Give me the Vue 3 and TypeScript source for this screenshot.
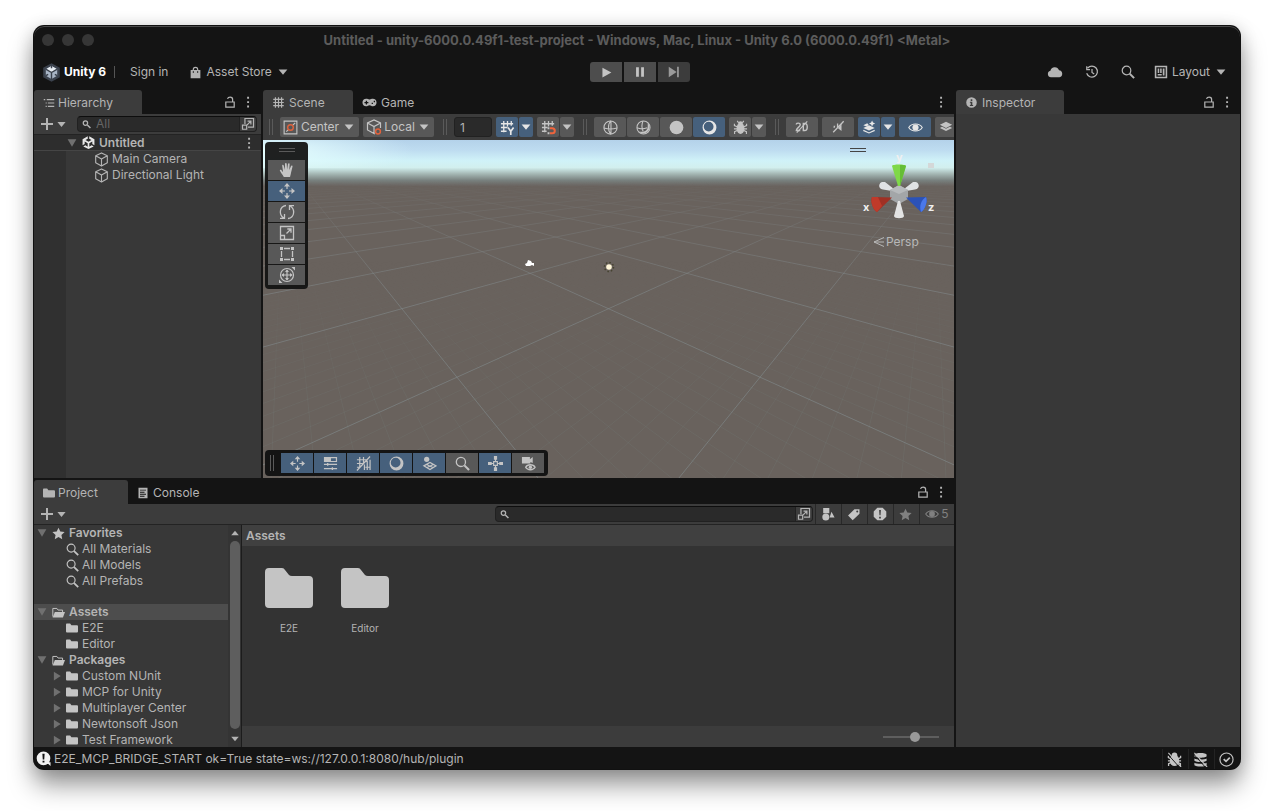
<script setup lang="ts">
import { h, ref, type FunctionalComponent } from 'vue'

const L = 'fill="none" stroke="currentColor"'

const icons: Record<string, string> = {
  caret: '<path d="M3 5h10l-5 6z"/>',
  up: '<path d="M3 11h10L8 5z"/>',
  open: '<path d="M1 2h14L8 14z"/>',
  closed: '<path d="M3 1v14l11-7z"/>',
  dots: '<path d="M7 2h2.200v2.200H7zM7 7h2.200v2.200H7zM7 12h2.200v2.200H7z"/>',
  plus: `<path ${L} stroke-width="2" d="M8 2v12M2 8h12"/>`,
  lock: `<path ${L} stroke-width="1.4" d="M3.200 8h9.600v5.800H3.200zM5.2 4.5c.4-1.6 1.500-2 3-2 2 0 2.8.8 2.8 2.500v3"/>`,
  hierarchy: `<path ${L} stroke-width="1.500" d="M1 3.500h2M5 3.500h10M3.500 8h1.500M6.500 8H15M3.500 12.500h1.500M6.500 12.500H15"/>`,
  hash: `<path ${L} stroke-width="1.4" d="M4.200 1.500v13M8 1.500v13M11.800 1.500v13M1.500 4.200h13M1.500 8h13M1.500 11.800h13"/>`,
  pad: '<path fill-rule="evenodd" d="M4.500 4C2 4 .5 5.700.5 8s1.500 4 3.800 4c1.700 0 2.300-1.200 3.700-1.200s2 1.200 3.700 1.200c2.300 0 3.800-1.700 3.800-4S14 4 11.500 4c-1.500 0-2 .7-3.500.7S6 4 4.500 4zM4 6h1.400v1.400h1.400v1.300H5.400V10H4V8.700H2.600V7.400H4zM12.500 6.200h1.400v1.400h-1.400zM10.300 8.300h1.400v1.400h-1.400z"/>',
  info: '<path fill-rule="evenodd" d="M8 1.500a6.500 6.500 0 1 0 0 13 6.500 6.500 0 0 0 0-13zM7 4h2v2H7zM6 7h3v4h1v1.300H6V11h1V8.300H6z"/>',
  search: `<circle ${L} stroke-width="1.4" cx="6.300" cy="6.300" r="4.900"/><path ${L} stroke-width="2.200" d="M10 10l5 5"/>`,
  searchsm: `<circle ${L} stroke-width="2" cx="5.500" cy="6.500" r="3.500"/><path ${L} stroke-width="2.400" d="M8.500 9.500l5 5"/>`,
  picker: `<path ${L} stroke-width="1.400" d="M4.500 8V1.700h9.800v9.800H8M1.700 9.200h4.800v4.800H1.700zM7 9l4-4M7.500 4.700h3.800v3.800"/>`,
  cube: `<path ${L} stroke-width="1.200" stroke-linejoin="round" d="M8 1l6.200 3v7.500L8 15l-6.200-3.500V4zM1.800 4L8 7.500 14.200 4M8 7.500V15"/>`,
  unity: '<path fill-rule="evenodd" d="M7.100.3v3L4.300 5 8 7.100 11.700 5 8.900 3.300v-3l6.400 3.700v7.300l-2.600-1.500V6.700L9 8.800v4.300l2.800-1.600 2.600 1.400L8 16l-6.400-3.100 2.600-1.400L7 13.100V8.800L3.300 6.700v3.100L.7 11.300V4z"/>',
  logo: '<path fill="#3b424d" d="M8 .2l7 3.900v7.800l-7 3.900-7-3.900V4.100z"/><path fill="#a9b6c6" d="M8 2.500l4.800 2.700v5.500L8 13.500l-4.800-2.800V5.200z"/><path fill="#e8edf3" d="M8 2.500l4.800 2.700L8 8 3.200 5.200z"/><path stroke="#3b424d" stroke-width="1.200" fill="none" d="M8 8v5.500M3.200 5.200L8 8l4.800-2.800M8 2.500v2M3.200 10.700l2-1.200M12.800 10.700l-2-1.200"/>',
  bag: '<path fill-rule="evenodd" d="M2 5h2.500c0-2.500 1-4 3.500-4s3.500 1.500 3.500 4H14v10H2zM6 5h4c0-1.500-.5-2.500-2-2.500S6 3.500 6 5zM4.700 6.500v1.700H6V6.500zM10 6.500v1.700h1.300V6.500z"/>',
  play: '<path d="M3 2v12l11-6z"/>',
  pause: '<path d="M3.500 2.500h3.200v11H3.500zM9.300 2.500h3.200v11H9.300z"/>',
  step: '<path d="M2 2v12l9-6zM11.500 2h2v12h-2z"/>',
  cloud: '<path d="M4 13.200a3.300 3.300 0 0 1-.6-6.500A4.500 4.500 0 0 1 12 6.300a3.500 3.500 0 0 1 .5 6.900z"/>',
  history: `<path ${L} stroke-width="1.400" d="M3 3.500A6.300 6.300 0 1 1 1.900 9.500M2 1.500v3.700h3.700M8 4.500v4l2.500 1.800"/>`,
  layout: `<path ${L} stroke-width="1.800" d="M1.800 1.800h12.400v12.400H1.800z"/><path d="M4.200 4h1.800v5H4.200zM7 4h1.800v5H7zM4.200 10.300h4.600V12H4.200zM10 4h2v8h-2z"/>`,
  pivot: `<path ${L} stroke-width="1.200" d="M1.200 1.200h13.600v13.600H1.200zM3.500 12.500l2-2M10.500 5.500l2.500-2.500"/><circle cx="8" cy="8" r="3" fill="none" stroke="#e0623c" stroke-width="1.500"/>`,
  local: `<path ${L} stroke-width="1.200" d="M9 15l-1-.5L1.500 11V4L8 1l6.500 3v5M1.500 4L8 7.500 14.500 4M8 7.500V14"/><circle cx="12" cy="12.500" r="2.400" fill="none" stroke="#e0623c" stroke-width="1.500"/>`,
  gridY: `<path ${L} stroke-width="1.400" d="M4 1v12M8 1v6M12 1v5M1 4h13M1 8h7M1 12h6"/><path ${L} stroke-width="1.800" d="M8.500 8l3 4 3-4M11.500 12v4"/>`,
  magnet: `<path ${L} stroke-width="1.400" d="M4 1v12M8 1v6M12 1v5M1 4h13M1 8h6M1 12h5"/><path fill="none" stroke="#f0643c" stroke-width="2.200" d="M9.500 8.700h2.500a2.700 2.700 0 0 1 0 5.400H9.500"/><path d="M7 7.600h2v2.200H7zM7 13h2v2.200H7z"/>`,
  wire: `<circle ${L} stroke-width="1.200" cx="8" cy="8" r="7"/><path ${L} stroke-width="1.200" d="M1 8.500c4 1.200 10 1.200 14 0M8.500 1v14M8.500 1c-3.500 3-3.500 11 0 14"/>`,
  shadedwire: `<circle ${L} stroke-width="1.100" cx="8" cy="8" r="7"/><path fill-rule="evenodd" d="M12.500 2.800A6.800 6.800 0 1 1 2.500 12c2 1 10 1.500 10-5 0-1.500 0-3 0-4.200z"/><path ${L} stroke-width="1.200" d="M1 8.300c3.500 1.500 7 1.500 11 0M7.500 1c-1.500 3-1.500 7 0 11"/>`,
  disc: '<circle cx="8" cy="8" r="7.300"/>',
  moon: '<path fill-rule="evenodd" d="M8 .6a7.400 7.400 0 1 0 0 14.800A7.400 7.400 0 0 0 8 .6zM7.100 1.900a5.200 5.200 0 1 1 0 10.400 5.200 5.200 0 0 1 0-10.400z"/>',
  bug: `<ellipse cx="8" cy="9" rx="4.200" ry="5.800"/><circle cx="8" cy="3.500" r="2.300"/><path ${L} stroke-width="1.200" d="M4.500 1l1.500 2M11.500 1L10 3M1.500 4v2L5 7.500M14.500 4v2L11 7.500M1 9.500h14M1.700 15v-2.500L5 11M14.300 15v-2.500L11 11"/>`,
  two: `<path ${L} stroke-width="1.600" d="M1.500 5c0-2 4.500-2 4.500.3C6 8 1.500 9 1.500 12H6M9.500 3.800h1.500c4 0 4 8.200 0 8.200H9.500z"/><path ${L} stroke-width="1.300" d="M2 14.500L14 1.500"/>`,
  mute: `<path d="M3 6.500h2L4 9H3zM12 4v8.500L8 9.500z"/><path ${L} stroke-width="1.500" d="M2.500 14L14.500 1.500M7.500 4v4"/>`,
  fx: `<path d="M8 6L1.500 9 8 12l6.500-3z"/><path ${L} stroke-width="1.400" d="M1.500 11.800L8 14.800l6.500-3"/><path d="M1.500 6l4.500-2.200 1.800 2L5 7.500zM11.500.5l1.100 2.400 2.400 1.100-2.400 1.100-1.100 2.400-1.100-2.400L8 4l2.400-1.100z"/>`,
  eye: `<path ${L} stroke-width="1.200" d="M.8 8C4 3 12 3 15.200 8 12 13 4 13 .8 8z"/><circle cx="8" cy="8" r="3.300"/>`,
  layers: '<path d="M8 2L1 5.500 8 9l7-3.500zM1 9l2.500-1.200L8 10l4.500-2.200L15 9l-7 3.500z"/>',
  hand: '<path d="M4.800 15c-1-2-3.300-4.600-3.900-6.200-.3-1 .9-1.400 1.600-.5l1.600 1.900L3.200 3.800c-.2-1.200 1.200-1.500 1.500-.4l1.200 4.300L6 1.800c0-1.200 1.600-1.200 1.700 0l.4 5.800.9-5.500c.2-1.200 1.700-1 1.600.2l-.3 5.800 1.700-4c.5-1 1.800-.5 1.500.6-.7 3-1.300 5-1.700 7.300L11 15z"/>',
  move: `<path ${L} stroke-width="1.200" d="M8 1v5M8 10v5M1 8h5M10 8h5"/><path d="M8 0L5 3.500h6zM8 16l-3-3.500h6zM0 8l3.500-3v6zM16 8l-3.500-3v6z"/>`,
  rotate: `<path ${L} stroke-width="1.300" d="M7 1.500C0 2.500-.2 11 4.800 14M1 14.300h4.500V10M9 14.500c7-1 7.200-9.500 2.200-12.500M15 1.700h-4.500V6"/>`,
  scale: `<path ${L} stroke-width="1.300" d="M1.500 1.500h13v13h-13zM1.500 10.500h4v4M7.500 8.500L12 4M8.300 4H12v3.700"/>`,
  rect: `<path ${L} stroke-width="1.300" d="M5 2.500h6M5 13.500h6M2.500 5v6M13.500 5v6"/><path d="M1 1h3v3H1zM12 1h3v3h-3zM1 12h3v3H1zM12 12h3v3h-3z"/>`,
  transform: `<circle ${L} stroke-width="1.200" cx="8" cy="8" r="6.500"/><path ${L} stroke-width="1.200" d="M8 3v10M3 8h10"/><path d="M8 2.500L6 5h4zM8 13.500L6 11h4zM2.500 8L5 6v4zM13.500 8L11 6v4zM12.500 0H16v3.500zM0 12.500V16h3.500z"/>`,
  sliders: `<path fill-rule="evenodd" d="M1 1h14v5.500H1zM8.500 2.300v3H13.700v-3z"/><path ${L} stroke-width="1.400" d="M1 9h14M1 13.500h14M5 7.500v3M10 12v3"/>`,
  gridoff: `<path ${L} stroke-width="1.300" d="M4 1v11M8 1v7M12 5v10M15 4v11M9 9v6M1 4h10M1 8h6M1 12h3M10 12h5M1 15.500L15 .5"/>`,
  plane: `<circle cx="5" cy="3.500" r="2.800"/><path ${L} stroke-width="1.300" d="M2 10.500L8.500 7l6.500 3.500L8.500 14.500zM5 9l7 3.500M12 9l-7 3.500"/>`,
  cross: `<path ${L} stroke-width="1.200" d="M6 6h4v4H6zM8 3v3M8 10v3M3 8h3M10 8h3"/><path d="M6.300 0h3.400v4H6.300zM6.300 12h3.400v4H6.300zM0 6.300h4v3.400H0zM12 6.300h4v3.400h-4z"/>`,
  cam: `<path d="M1 1h8.500v2.500L12.500 1v6.500L10 6.500V8H1z"/><path ${L} stroke-width="1.500" d="M5 12c2-3.500 8-3.500 10 0-2 3.500-8 3.500-10 0z"/><circle cx="10" cy="12" r="1.800"/>`,
  folder: '<path d="M0 3.500C0 2.700.5 2 1.300 2h4.200l1.700 2.200h7.500c.8 0 1.300.5 1.300 1.300v7.300c0 .8-.5 1.200-1.300 1.200H1.300C.5 14 0 13.600 0 12.800z"/>',
  openfolder: `<path ${L} stroke-width="1.200" d="M1 13V3h5l1.500 2H13v2.500"/><path d="M3.500 7.500H16L13.500 14H.8z"/>`,
  star: '<path d="M8 .8l2.200 4.800 5.300.6-3.900 3.600 1 5.200L8 12.400 3.400 15l1-5.200L.5 6.200l5.300-.6z"/>',
  consoleicon: '<path fill-rule="evenodd" d="M2 1h12v14H2zM4 3.500v1.300h8V3.500zM4 6.200v1.300h6V6.200zM4 9v1.300h8V9zM4 11.700V13h6v-1.300z"/>',
  shapes: '<path d="M2.500 1h7v6h-7zM12 5.500l3.500 6.500H9.800z"/><circle cx="5.500" cy="11.500" r="4"/>',
  tag: '<path fill-rule="evenodd" d="M8.500 2.500h5.800v5.300L6.500 15l-5.300-5.300zM11.700 4a1.100 1.100 0 1 0 0 2.300 1.100 1.100 0 0 0 0-2.300z"/>',
  alert: '<path fill-rule="evenodd" d="M5 .8h6L15.200 5v6L11 15.200H5L.8 11V5zM7 3.500l.4 6h1.200l.4-6zM7 11v2h2v-2z"/>',
  bubble: '<path fill="#f2f2f2" d="M8 .5a7.300 7.300 0 1 1 0 14.600A7.300 7.300 0 0 1 8 .5zM11 12h4.500v4z"/><path fill="#111" d="M6.800 3h2.400l-.4 6H7.200zM7 10.300h2v2H7z"/>',
  bugoff: `<ellipse cx="8" cy="9" rx="5" ry="6"/><circle cx="8" cy="3.500" r="3"/><path ${L} stroke-width="1.400" d="M1.500 4v2L5 7.500M14.500 4v2L11 7.500M1 9.500h14M1.700 15v-2.500L5 11M14.300 15v-2.500L11 11"/><path stroke="#141414" stroke-width="1" d="M.5 2L13 16"/><path stroke="currentColor" stroke-width="1.200" d="M1.500 1l13.500 15"/>`,
  cacheoff: `<path d="M1.500 3c0-2.500 13-2.500 13 0v1.500c0 2-13 2-13 0zM1.500 7c2 1.500 11 1.500 13 0v2.200c-2 2-11 2-13 0zM1.500 11.500c2 1.500 11 1.500 13 0V14c-2 2-11 2-13 0z"/><path stroke="#141414" stroke-width="1" d="M.5 2L13 16"/><path stroke="currentColor" stroke-width="1.200" d="M1.500 1l13.500 15"/>`,
  check: `<circle ${L} stroke-width="1.200" cx="8" cy="8" r="7"/><path ${L} stroke-width="1.800" d="M5 7.500L7.500 10 11.500 6"/>`,
}

const Icon: FunctionalComponent<{ name: string; size?: number }> = (p) =>
  h('svg', {
    viewBox: '0 0 16 16',
    width: p.size ?? 14,
    height: p.size ?? 14,
    fill: 'currentColor',
    'aria-hidden': 'true',
    innerHTML: icons[p.name],
  })
Icon.props = ['name', 'size']

// Ground grid: diagonal lines in perspective, vanishing at y = 22 in viewport units.
const CX = 345.5
const HORIZON = 22
function ground(a: number, n: number): [number, number] {
  const s = 1 / (0.0033 + 0.00154 * n)
  return [CX + a * s, HORIZON + s / 1.408]
}
function gridPath(step: number, range: number, far: number): string {
  let d = ''
  for (let i = -range; i <= range; i++) {
    const k = 0.5 + i * step
    for (const dir of [1, -1]) {
      const [x1, y1] = ground((dir * -1.1) / 2 + k, -1.1)
      const [x2, y2] = ground((dir * far) / 2 + k, far)
      d += `M${x1.toFixed(1)} ${y1.toFixed(1)}L${x2.toFixed(1)} ${y2.toFixed(1)}`
    }
  }
  return d
}
const majorGrid = gridPath(1, 24, 40)
const minorGrid = gridPath(0.1, 60, 6)

const step = ref('1')
const zoomLevel = ref(58)
const hierarchySearch = ref('')
const projectSearch = ref('')

const tools = [
  { icon: 'hand', label: 'View' },
  { icon: 'move', label: 'Move', on: true },
  { icon: 'rotate', label: 'Rotate' },
  { icon: 'scale', label: 'Scale' },
  { icon: 'rect', label: 'Rect' },
  { icon: 'transform', label: 'Transform' },
]
const overlays = [
  { icon: 'move', label: 'Tools', on: true },
  { icon: 'sliders', label: 'Tool Settings', on: true },
  { icon: 'gridoff', label: 'Grid and Snap', on: true },
  { icon: 'moon', label: 'Draw Modes', on: true },
  { icon: 'plane', label: 'View Options', on: true },
  { icon: 'search', label: 'Search', on: false },
  { icon: 'cross', label: 'Orientation', on: true },
  { icon: 'cam', label: 'Cameras', on: false },
]
const drawModes = [
  { icon: 'wire', label: 'Wireframe' },
  { icon: 'shadedwire', label: 'Shaded Wireframe' },
  { icon: 'disc', label: 'Unlit' },
  { icon: 'moon', label: 'Shaded', on: true },
]
const favorites = ['All Materials', 'All Models', 'All Prefabs']
const assetFolders = ['E2E', 'Editor']
const packages = ['Custom NUnit', 'MCP for Unity', 'Multiplayer Center', 'Newtonsoft Json', 'Test Framework']
const filters = [
  { icon: 'shapes', label: 'Search by Type' },
  { icon: 'tag', label: 'Search by Label' },
  { icon: 'alert', label: 'Search by Import Log' },
]
</script>

<template>
  <div class="desktop">
    <main class="window">
      <header class="titlebar">
        <div class="lights"><i></i><i></i><i></i></div>
        <h1>Untitled - unity-6000.0.49f1-test-project - Windows, Mac, Linux - Unity 6.0 (6000.0.49f1) &lt;Metal&gt;</h1>
      </header>

      <nav class="topbar">
        <div class="top-left">
          <Icon name="logo" :size="19" />
          <strong>Unity 6</strong>
          <span class="divider"></span>
          <button class="flat signin">Sign in</button>
          <button class="flat store"><Icon name="bag" :size="13" />Asset Store<Icon name="caret" :size="14" /></button>
        </div>
        <div class="playbar">
          <button aria-label="Play"><Icon name="play" :size="13" /></button>
          <button aria-label="Pause"><Icon name="pause" :size="14" /></button>
          <button aria-label="Step"><Icon name="step" :size="14" /></button>
        </div>
        <div class="top-right">
          <button class="flat" aria-label="Cloud"><Icon name="cloud" :size="16" /></button>
          <button class="flat" aria-label="History"><Icon name="history" :size="14" /></button>
          <button class="flat" aria-label="Search"><Icon name="search" :size="14" /></button>
          <button class="flat layout"><Icon name="layout" :size="14" />Layout<Icon name="caret" :size="14" /></button>
        </div>
      </nav>

      <div class="dock">
        <section class="panel hierarchy">
          <div class="tabs">
            <button class="tab on hier-tab"><Icon name="hierarchy" :size="12" />Hierarchy</button>
            <span class="tab-tools">
              <button class="flat" aria-label="Lock"><Icon name="lock" /></button>
              <button class="flat" aria-label="More"><Icon name="dots" /></button>
            </span>
          </div>
          <div class="bar">
            <button class="flat add" aria-label="Create"><Icon name="plus" :size="16" /><Icon name="caret" :size="13" /></button>
            <div class="search hier-search">
              <Icon name="searchsm" :size="10" />
              <input v-model="hierarchySearch" aria-label="Search hierarchy" placeholder="All" />
              <button class="pick" aria-label="Open search"><Icon name="picker" /></button>
            </div>
          </div>
          <div class="scene-row">
            <Icon name="open" :size="10" /><Icon name="unity" :size="13" /><b>Untitled</b>
            <button class="flat" aria-label="Scene menu"><Icon name="dots" /></button>
          </div>
          <ul class="objects">
            <li><Icon name="cube" :size="15" />Main Camera</li>
            <li><Icon name="cube" :size="15" />Directional Light</li>
          </ul>
        </section>

        <section class="panel scene">
          <div class="tabs">
            <button class="tab on scene-tab"><Icon name="hash" :size="13" />Scene</button>
            <button class="tab"><Icon name="pad" :size="15" />Game</button>
            <span class="tab-tools"><button class="flat" aria-label="More"><Icon name="dots" /></button></span>
          </div>
          <div class="scenebar">
            <span class="grip"></span>
            <button class="btn center"><Icon name="pivot" :size="15" />Center<Icon name="caret" :size="14" /></button>
            <button class="btn local"><Icon name="local" :size="16" />Local<Icon name="caret" :size="14" /></button>
            <span class="grip"></span>
            <input v-model="step" class="step" aria-label="Grid size" />
            <span class="group">
              <button class="btn main on" aria-label="Grid snapping"><Icon name="gridY" :size="15" /></button>
              <button class="btn drop on" aria-label="Grid snapping options"><Icon name="caret" :size="14" /></button>
            </span>
            <span class="group">
              <button class="btn main" aria-label="Snap increment"><Icon name="magnet" :size="15" /></button>
              <button class="btn drop" aria-label="Snap options"><Icon name="caret" :size="14" /></button>
            </span>
            <span class="grip"></span>
            <span class="group">
              <button v-for="m in drawModes" :key="m.label" class="btn wide" :class="{ on: m.on }" :aria-label="m.label">
                <Icon :name="m.icon" :size="15" />
              </button>
            </span>
            <span class="group">
              <button class="btn main" aria-label="Debug draw"><Icon name="bug" :size="15" /></button>
              <button class="btn drop" aria-label="Debug draw options"><Icon name="caret" :size="14" /></button>
            </span>
            <span class="grip"></span>
            <button class="btn wide" aria-label="2D view"><Icon name="two" :size="14" /></button>
            <button class="btn wide" aria-label="Scene audio"><Icon name="mute" :size="14" /></button>
            <span class="group">
              <button class="btn main on" aria-label="Effects"><Icon name="fx" :size="14" /></button>
              <button class="btn drop on" aria-label="Effect options"><Icon name="caret" :size="14" /></button>
            </span>
            <button class="btn wide on" aria-label="Scene visibility"><Icon name="eye" :size="15" /></button>
            <button class="btn main" aria-label="Gizmo layers"><Icon name="layers" :size="14" /></button>
          </div>

          <div class="viewport">
            <svg class="world" viewBox="0 0 691 338" preserveAspectRatio="xMidYMin slice" aria-label="Scene view">
              <defs>
                <linearGradient id="sky" x1="0" y1="0" x2="0" y2="1">
                  <stop offset="0" stop-color="#b4d2ea" />
                  <stop offset=".22" stop-color="#bedcf0" />
                  <stop offset=".45" stop-color="#d0f2f8" />
                  <stop offset=".6" stop-color="#d2efee" />
                  <stop offset=".74" stop-color="#a3b5b2" />
                  <stop offset=".88" stop-color="#78807e" />
                  <stop offset="1" stop-color="#6a635f" />
                </linearGradient>
                <radialGradient id="glow" cx="0" cy=".4" r="1" gradientTransform="scale(.42 1)">
                  <stop offset="0" stop-color="#e6ffff" />
                  <stop offset="1" stop-color="#e6ffff" stop-opacity="0" />
                </radialGradient>
                <linearGradient id="fade" x1="0" y1="42" x2="0" y2="150" gradientUnits="userSpaceOnUse">
                  <stop offset="0" stop-color="#fff" stop-opacity="0" />
                  <stop offset=".3" stop-color="#fff" stop-opacity=".4" />
                  <stop offset="1" stop-color="#fff" />
                </linearGradient>
                <linearGradient id="fadeMinor" x1="0" y1="120" x2="0" y2="270" gradientUnits="userSpaceOnUse">
                  <stop offset="0" stop-color="#fff" stop-opacity="0" />
                  <stop offset="1" stop-color="#fff" />
                </linearGradient>
                <mask id="near" maskUnits="userSpaceOnUse" x="0" y="0" width="691" height="338"><rect width="691" height="338" fill="url(#fade)" /></mask>
                <mask id="nearMinor" maskUnits="userSpaceOnUse" x="0" y="0" width="691" height="338"><rect width="691" height="338" fill="url(#fadeMinor)" /></mask>
              </defs>
              <rect width="691" height="338" fill="#69625d" />
              <rect width="691" height="46" fill="url(#sky)" />
              <rect width="360" height="28" fill="url(#glow)" />
              <g mask="url(#nearMinor)"><path :d="minorGrid" stroke="#747c78" stroke-opacity=".24" stroke-width="1" fill="none" /></g>
              <g mask="url(#near)"><path :d="majorGrid" stroke="#838a8c" stroke-opacity=".55" stroke-width="1" fill="none" /></g>
              <path d="M262 124l2-1 1-3 3 1 1 2h2v3l-2-1-2 1h-4z" fill="#fff" />
              <circle cx="346" cy="127" r="4.500" fill="none" stroke="#45422f" stroke-width="1.500" stroke-dasharray="1.500 2" />
              <circle cx="346" cy="127" r="2.800" fill="#fff6d8" />
            </svg>

            <div class="toolbox">
              <span class="handle"></span>
              <button v-for="t in tools" :key="t.label" class="btn" :class="{ on: t.on }" :aria-label="t.label"><Icon :name="t.icon" :size="16" /></button>
            </div>

            <div class="orient">
              <span class="handle dark"></span>
              <svg class="gizmo" viewBox="0 0 80 84" width="80" height="84" aria-label="Orientation gizmo">
                <path d="M32 39l-9-1.500c-6-1-4-8 0-7.500h2l9 7z" fill="#dfe2e4" />
                <path d="M46 39l9-1.500c6-1 4-8 0-7.500h-2l-9 7z" fill="#dfe2e4" />
                <path d="M39 33l9 5v9l-9 5-9-5v-9z" fill="#a3a6a8" />
                <path d="M39 33l9 5-9 4-9-4z" fill="#b7babc" />
                <path d="M38 49h2l4 15c0 3-10 3-10 0z" fill="#e3e3e3" />
                <path d="M32 45.500L12 45c-2 4 1 13 5 15z" fill="#a03024" />
                <path d="M12 45c-2 4 1 13 5 15l5-6-4-9z" fill="#bf3a2a" />
                <path d="M46 45.500l20-.5c2 4-1 13-5 15z" fill="#2b52b8" />
                <path d="M66 45c2 4-1 13-5 15-2-6 0-12 5-15z" fill="#4a78ea" />
                <path d="M32 14c0-2 14-2 14 0l-6 20h-2z" fill="#7fd848" />
                <path d="M40 13c4 0 6 .5 6 1l-6 20z" fill="#66bd36" />
                <rect x="68" y="11" width="6" height="5" fill="#d4d8d8" />
                <text x="36" y="9">y</text><text x="3" y="59">x</text><text x="68" y="59">z</text>
              </svg>
              <button class="flat persp">
                <svg viewBox="0 0 11 10" width="11" height="10" fill="none" stroke="currentColor"><path d="M11 .5L1 5l10 4.500M1 5h10" /></svg>Persp
              </button>
            </div>

            <div class="overlaybar">
              <span class="grip"></span>
              <button v-for="o in overlays" :key="o.label" class="btn wide" :class="{ on: o.on }" :aria-label="o.label"><Icon :name="o.icon" :size="15" /></button>
            </div>
          </div>
        </section>

        <section class="panel project">
          <div class="tabs">
            <button class="tab on project-tab"><Icon name="folder" :size="12" />Project</button>
            <button class="tab console-tab"><Icon name="consoleicon" :size="12" />Console</button>
            <span class="tab-tools">
              <button class="flat" aria-label="Lock"><Icon name="lock" /></button>
              <button class="flat" aria-label="More"><Icon name="dots" /></button>
            </span>
          </div>
          <div class="bar project-bar">
            <button class="flat add" aria-label="Create"><Icon name="plus" :size="16" /><Icon name="caret" :size="13" /></button>
            <div class="search project-search">
              <Icon name="searchsm" :size="10" />
              <input v-model="projectSearch" aria-label="Search project" />
              <button class="pick" aria-label="Open search"><Icon name="picker" /></button>
            </div>
            <div class="filters">
              <button v-for="f in filters" :key="f.label" :aria-label="f.label"><Icon :name="f.icon" :size="14" /></button>
              <button class="dim" aria-label="Save search"><Icon name="star" :size="13" /></button>
              <button class="dim hidden-count" aria-label="Hidden packages"><Icon name="eye" :size="14" />5</button>
            </div>
          </div>
          <div class="browser">
            <ul class="tree">
              <li class="root"><Icon name="open" :size="10" /><Icon name="star" :size="13" /><b>Favorites</b></li>
              <li v-for="f in favorites" :key="f" class="leaf"><Icon name="search" :size="13" />{{ f }}</li>
              <li class="root selected"><Icon name="open" :size="10" /><Icon name="openfolder" :size="13" /><b>Assets</b></li>
              <li v-for="f in assetFolders" :key="f" class="leaf wide-gap"><Icon name="folder" :size="12" />{{ f }}</li>
              <li class="root"><Icon name="open" :size="10" /><Icon name="openfolder" :size="13" /><b>Packages</b></li>
              <li v-for="p in packages" :key="p" class="pack"><Icon name="closed" :size="10" /><Icon name="folder" :size="12" />{{ p }}</li>
            </ul>
            <div class="scrollbar">
              <Icon name="up" :size="12" />
              <span class="thumb"></span>
              <Icon name="caret" :size="12" />
            </div>
            <div class="content">
              <h2>Assets</h2>
              <div class="items">
                <button v-for="f in assetFolders" :key="f" class="item">
                  <svg viewBox="0 0 48 40" width="48" height="40" fill="#c4c4c4" aria-hidden="true">
                    <path d="M0 4q0-4 4-4h13q2 0 3 2l4 5q1 1 3 1h17q4 0 4 4v24q0 4-4 4H4q-4 0-4-4z" />
                  </svg>
                  {{ f }}
                </button>
              </div>
              <div class="footer"><input v-model="zoomLevel" type="range" min="0" max="100" aria-label="Icon size" /></div>
            </div>
          </div>
        </section>

        <section class="panel inspector">
          <div class="tabs">
            <button class="tab on hier-tab info-tab"><Icon name="info" :size="13" />Inspector</button>
            <span class="tab-tools">
              <button class="flat" aria-label="Lock"><Icon name="lock" /></button>
              <button class="flat" aria-label="More"><Icon name="dots" /></button>
            </span>
          </div>
        </section>
      </div>

      <footer class="status">
        <Icon name="bubble" :size="15" />
        <span>E2E_MCP_BRIDGE_START ok=True state=ws://127.0.0.1:8080/hub/plugin</span>
        <div class="status-tools">
          <button aria-label="Debugger disabled"><Icon name="bugoff" :size="15" /></button>
          <button aria-label="Cache server disabled"><Icon name="cacheoff" :size="15" /></button>
          <button aria-label="Background tasks"><Icon name="check" :size="15" /></button>
        </div>
      </footer>
    </main>
  </div>
</template>

<style>
body {
  margin: 0;
  background: #fff;
}
</style>

<style scoped>
* {
  box-sizing: border-box;
}
.desktop {
  display: flex;
  min-height: 100vh;
  padding: 26px 34px 42px;
  overflow: hidden;
  font: 12px/16px Inter, 'Liberation Sans', sans-serif;
  color: #b4b4b4;
}
.window {
  flex: 1;
  min-width: 0;
  display: flex;
  flex-direction: column;
  overflow: hidden;
  background: #141414;
  border-radius: 10px;
  box-shadow: 0 0 0 1px #111, 0 16px 26px rgba(0, 0, 0, 0.4), 0 2px 18px rgba(0, 0, 0, 0.18);
}
svg {
  display: block;
  flex: none;
}
button {
  font: inherit;
  color: inherit;
  border: 0;
  padding: 0;
  margin: 0;
  background: none;
  display: flex;
  align-items: center;
  justify-content: center;
  white-space: nowrap;
}
input {
  font: inherit;
  color: inherit;
  border: 0;
  padding: 0;
  margin: 0;
  background: none;
  outline: 0;
  min-width: 0;
}
ul {
  list-style: none;
  margin: 0;
  padding: 0;
}
.titlebar {
  display: flex;
  align-items: center;
  height: 28px;
  box-shadow: inset 0 1px #4a4a4a;
  border-radius: 10px 10px 0 0;
}
.lights {
  flex: none;
  display: flex;
  gap: 8px;
  width: 72px;
  padding-left: 8px;
}
.lights i {
  width: 12px;
  height: 12px;
  border-radius: 50%;
  background: #363636;
}
.titlebar h1 {
  flex: 1;
  margin: 0 72px 0 0;
  font-size: 13px;
  font-weight: 700;
  line-height: 28px;
  text-align: center;
  white-space: nowrap;
  color: #5c5c5c;
}
.topbar {
  display: grid;
  grid-template-columns: 1fr auto 1fr;
  align-items: center;
  height: 36px;
}
.top-left,
.top-right {
  display: flex;
  align-items: center;
}
.top-left {
  padding-left: 8px;
}
.top-left strong {
  padding-left: 3px;
  color: #fff;
}
.divider {
  width: 1px;
  height: 12px;
  margin: 0 15px 0 8px;
  background: #555;
}
.store {
  gap: 4px;
  margin-left: 21px;
}
.playbar {
  display: flex;
  gap: 2px;
  padding-left: 6px;
}
.playbar button {
  width: 32px;
  height: 20px;
  background: #4d4d4d;
  color: #c4c4c4;
}
.playbar button:first-child {
  border-radius: 3px 0 0 3px;
}
.playbar button:last-child {
  border-radius: 0 3px 3px 0;
  background: #3c3c3c;
  color: #9a9a9a;
}
.top-right {
  justify-content: flex-end;
  gap: 22px;
  padding-right: 12px;
}
.layout {
  gap: 4px;
  margin-left: -3px;
}
.dock {
  flex: 1;
  display: grid;
  grid-template-columns: 227px minmax(0, 1fr) 284px;
  grid-template-rows: minmax(0, 1fr) 267px;
  gap: 2px;
}
.panel {
  display: flex;
  flex-direction: column;
  min-width: 0;
  min-height: 0;
  overflow: hidden;
  background: #383838;
}
.project {
  grid-column: 1 / 3;
  grid-row: 2;
}
.inspector {
  grid-column: 3;
  grid-row: 1 / 3;
}
.tabs {
  flex: none;
  display: flex;
  align-items: stretch;
  height: 24px;
  background: #141414;
}
.tab {
  justify-content: flex-start;
  gap: 4px;
  padding: 1px 9px 0;
}
.tab.on {
  background: #3c3c3c;
  border-radius: 3px 3px 0 0;
}
.hier-tab {
  width: 108px;
}
.hier-tab:not(.info-tab) {
  gap: 3px;
}
.scene-tab {
  width: 90px;
}
.project-tab {
  width: 94px;
  gap: 3px;
}
.tab-tools {
  display: flex;
  align-items: center;
  gap: 4px;
  margin-left: auto;
  padding-right: 6px;
}
.bar {
  flex: none;
  display: flex;
  align-items: center;
  height: 20px;
  padding-left: 5px;
  background: #3c3c3c;
}
.search {
  display: flex;
  align-items: center;
  min-width: 0;
  height: 16px;
  padding-left: 4px;
  gap: 4px;
  background: #2a2a2a;
  border: 1px solid #212121;
  border-top-color: #0d0d0d;
  border-radius: 4px;
}
.search input {
  flex: 1;
  width: 0;
  height: 14px;
}
.search input::placeholder {
  color: #666;
  opacity: 1;
}
.pick {
  flex: none;
  width: 17px;
  height: 14px;
  background: #3c3c3c;
  border-left: 1px solid #212121;
  border-radius: 0 3px 3px 0;
}
.hier-search {
  flex: 1;
  margin: 0 4px 0 9px;
}
.scene-row {
  flex: none;
  display: flex;
  align-items: center;
  height: 17px;
  padding: 0 5px 0 33px;
  background: #2d2d2d;
  border-top: 1px solid #232323;
  border-bottom: 1px solid #454545;
}
.scene-row b {
  margin-left: 4px;
}
.scene-row svg:first-child,
.root svg:first-child,
.pack svg:first-child {
  color: #707070;
}
.scene-row svg + svg {
  margin-left: 5px;
  color: #e8e8e8;
}
.scene-row button {
  margin-left: auto;
}
.scene-row button svg:first-child {
  color: #b4b4b4;
}
b {
  font-weight: 600;
}
.objects {
  flex: 1;
  background: linear-gradient(90deg, #303030 32px, #383838 32px);
}
.objects li {
  display: flex;
  align-items: center;
  gap: 3px;
  height: 16px;
  padding-left: 60px;
}
.scenebar {
  flex: none;
  display: flex;
  align-items: center;
  gap: 4px;
  height: 26px;
  padding-left: 1px;
  background: #3c3c3c;
  overflow: hidden;
}
.grip {
  flex: none;
  width: 4px;
  height: 16px;
  margin: 0 3px 0 5px;
  border: solid #5a5a5a;
  border-width: 0 1px;
}
.btn {
  flex: none;
  height: 20px;
  background: #585858;
  color: #c4c4c4;
  border-radius: 2px;
}
.btn.on {
  background: #46607c;
}
.scenebar .btn.on {
  color: #e6e6e6;
}
.center {
  width: 79px;
  gap: 3px;
}
.local {
  width: 71px;
  gap: 2px;
}
.step {
  flex: none;
  width: 38px;
  height: 20px;
  padding: 0 5px;
  background: #2a2a2a;
  border: 1px solid #212121;
  border-radius: 3px;
}
.group {
  flex: none;
  display: flex;
  gap: 1px;
}
.main {
  width: 22px;
}
.drop {
  width: 14px;
}
.wide {
  width: 32px;
}
.viewport {
  position: relative;
  flex: 1;
  min-height: 0;
  overflow: hidden;
}
.world {
  width: 100%;
  height: 100%;
}
.toolbox {
  position: absolute;
  left: 2px;
  top: 2px;
  width: 43px;
  display: flex;
  flex-direction: column;
  gap: 1px;
  padding: 0 3px 4px;
  background: rgba(18, 18, 18, 0.94);
  border-radius: 4px;
}
.handle {
  width: 16px;
  height: 4px;
  margin: 6px auto 7px;
  border: solid #5a5a5a;
  border-width: 1px 0;
}
.handle.dark {
  border-color: #444;
  margin: 0;
}
.toolbox .btn,
.overlaybar .btn {
  border-radius: 0;
}
.orient {
  position: absolute;
  right: 14px;
  top: 8px;
  width: 90px;
  display: flex;
  flex-direction: column;
}
.gizmo {
  align-self: flex-end;
  overflow: visible;
}
.gizmo text {
  font: 700 11px Inter, 'Liberation Sans', sans-serif;
  fill: #f0f0f0;
}
.persp {
  align-self: flex-start;
  gap: 2px;
  height: 12px;
  padding-left: 23px;
  color: #b8b8b8;
}
.overlaybar {
  position: absolute;
  left: 2px;
  bottom: 2px;
  display: flex;
  gap: 1px;
  padding: 3px 4px 3px 3px;
  align-items: center;
  background: #141414;
  border-radius: 4px;
}
.overlaybar .grip {
  margin: 0 6px 0 2px;
}
.project-bar {
  height: 21px;
  border-bottom: 1px solid #232323;
}
.project-search {
  width: 318px;
  margin: 0 2px 0 auto;
}
.filters {
  display: flex;
  align-self: stretch;
}
.filters button {
  width: 26px;
  padding-right: 2px;
  color: #c4c4c4;
  border-left: 1px solid #282828;
}
.filters .dim {
  color: #808080;
}
.filters .hidden-count {
  width: 35px;
  gap: 2px;
  padding: 0;
}
.browser {
  flex: 1;
  display: grid;
  grid-template-columns: 194px 14px minmax(0, 1fr);
  min-height: 0;
}
.tree {
  overflow: hidden;
}
.tree li {
  display: flex;
  align-items: center;
  height: 16px;
  gap: 4px;
}
.tree .root {
  padding-left: 3px;
}
.tree .root svg + svg {
  color: #c4c4c4;
  margin-left: 1px;
}
.tree .selected {
  margin-top: 15px;
  background: #4d4d4d;
}
.tree .leaf {
  padding-left: 32px;
  gap: 3px;
}
.tree .wide-gap {
  gap: 4px;
}
.tree .pack {
  padding-left: 18px;
}
.leaf svg,
.pack svg + svg {
  color: #c4c4c4;
}
.scrollbar {
  display: flex;
  flex-direction: column;
  align-items: center;
  padding: 2px 0;
  background: #343434;
  border-right: 1px solid #1c1c1c;
}
.thumb {
  flex: 1;
  width: 10px;
  margin: 2px 0 4px;
  border-radius: 5px;
  background: #5e5e5e;
}
.content {
  display: flex;
  flex-direction: column;
  background: #333;
}
.content h2 {
  margin: 0;
  padding-left: 4px;
  font-size: 12px;
  font-weight: 600;
  line-height: 21px;
  background: #404040;
}
.items {
  flex: 1;
  display: flex;
  align-items: flex-start;
  padding: 22px 9px;
}
.item {
  width: 76px;
  flex-direction: column;
  gap: 12px;
  font-size: 10px;
}
.footer {
  height: 21px;
  display: flex;
  align-items: center;
  justify-content: flex-end;
  padding-right: 15px;
  background: #3c3c3c;
}
.footer input {
  appearance: none;
  width: 56px;
  height: 10px;
}
.footer input::-webkit-slider-runnable-track {
  height: 2px;
  background: #5e5e5e;
}
.footer input::-webkit-slider-thumb {
  appearance: none;
  width: 10px;
  height: 10px;
  margin-top: -4px;
  border-radius: 50%;
  background: #999;
}
.status {
  display: flex;
  align-items: center;
  height: 22px;
  padding: 1px 0 0 2px;
  gap: 3px;
}
.status-tools {
  display: flex;
  align-self: stretch;
  margin-left: auto;
  padding-top: 1px;
}
.status-tools button {
  width: 26px;
  padding-right: 2px;
  color: #c4c4c4;
  border-left: 1px solid #232323;
}
</style>
